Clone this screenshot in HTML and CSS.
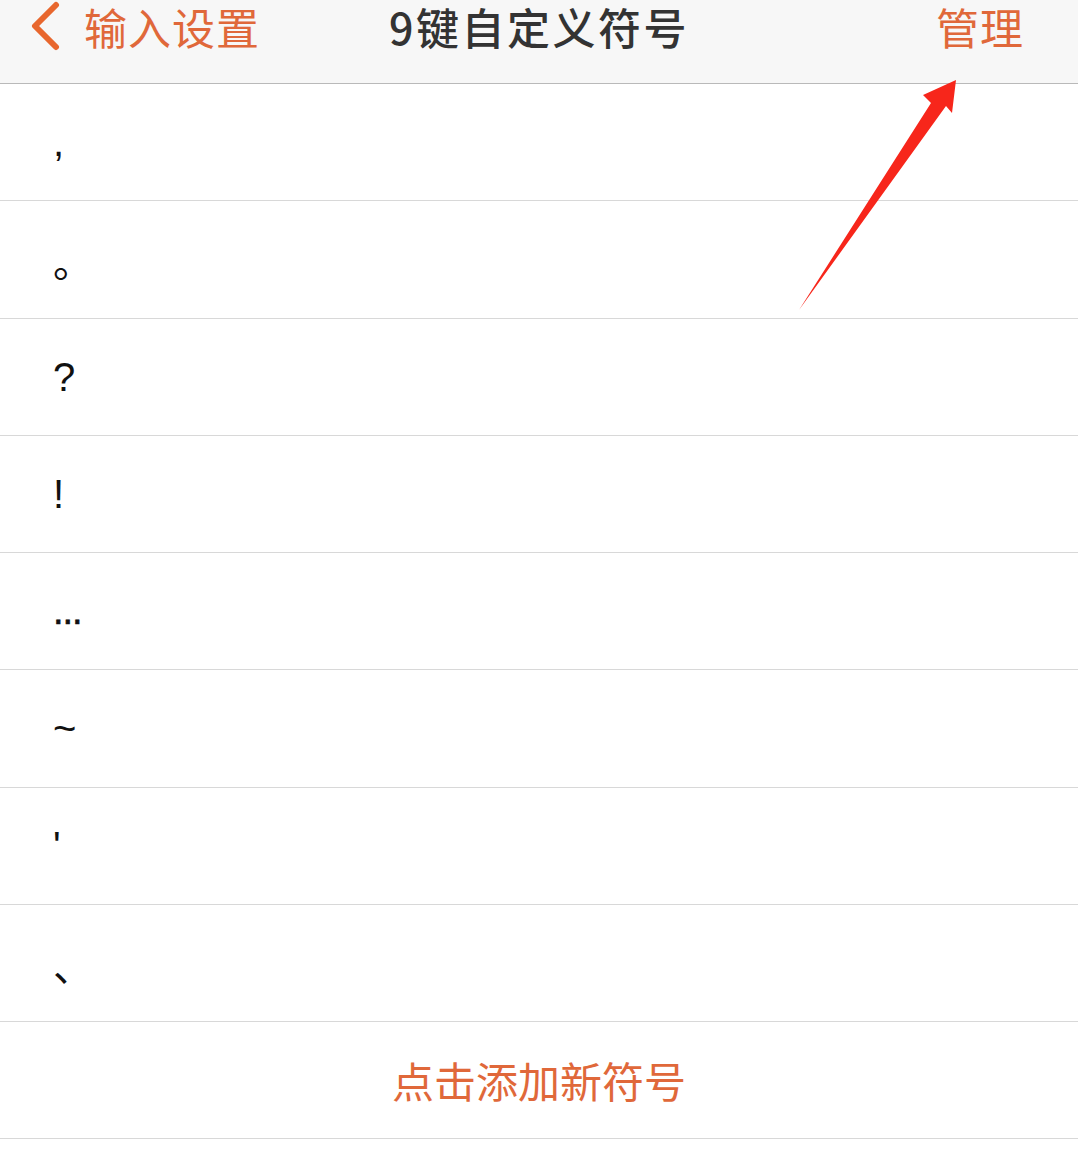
FILE: index.html
```html
<!DOCTYPE html>
<html lang="zh-CN">
<head>
<meta charset="utf-8">
<title>9键自定义符号</title>
<link rel="stylesheet" href="styles.css">
</head>
<body>
<div class="screen">
  <header class="navbar">
    <div class="nav-left">
      <svg class="chevron" width="30" height="50" viewBox="0 0 30 50"><polyline points="26,4 5,25 26,46" fill="none" stroke="#e8672e" stroke-width="6" stroke-linecap="round" stroke-linejoin="round"/></svg>
      <span class="back-text">输入设置</span>
    </div>
    <div class="nav-title">9键自定义符号</div>
    <div class="nav-right">管理</div>
  </header>
  <ul class="list">
    <li class="row"><span class="sym">,</span></li>
    <li class="row"><span class="sym cjk">。</span></li>
    <li class="row"><span class="sym">?</span></li>
    <li class="row"><span class="sym">!</span></li>
    <li class="row"><span class="sym dots">...</span></li>
    <li class="row"><span class="sym">~</span></li>
    <li class="row"><span class="sym">'</span></li>
    <li class="row"><span class="sym cjk">、</span></li>
    <li class="row add"><span class="add-text">点击添加新符号</span></li>
  </ul>
  <svg class="annot" width="1078" height="1164" viewBox="0 0 1078 1164">
    <polygon points="799,310 931,103 923,95 956,80 952,113 946,106" fill="#f7261b"/>
  </svg>
</div>
</body>
</html>
```

FILE: styles.css
```css
html, body {
  margin: 0;
  padding: 0;
  background: #ffffff;
}
body {
  font-family: "Liberation Sans", "Noto Sans CJK SC", sans-serif;
}
.screen {
  position: relative;
  width: 1078px;
  height: 1164px;
  overflow: hidden;
  background: #ffffff;
}
.navbar {
  box-sizing: border-box;
  height: 84px;
  padding-bottom: 31px;
  background: #f7f7f7;
  border-bottom: 1px solid #b9b9b9;
  display: grid;
  grid-template-columns: 1fr auto 1fr;
  align-items: center;
  font-family: "Noto Sans CJK SC", sans-serif;
  font-size: 43px;
  line-height: 52px;
}
.nav-left {
  display: flex;
  align-items: center;
  padding-left: 30px;
  color: #e0683a;
}
.chevron {
  display: block;
  margin-right: 24px;
}
.back-text {
  letter-spacing: 1px;
}
.nav-title {
  color: #333333;
  font-weight: 500;
  letter-spacing: 2.5px;
}
.nav-right {
  justify-self: end;
  padding-right: 54px;
  color: #e0683a;
  letter-spacing: 1px;
}
.list {
  list-style: none;
  margin: 0;
  padding: 0;
}
.row {
  box-sizing: border-box;
  height: 117.25px;
  border-bottom: 1px solid #d8d8d8;
  display: flex;
  align-items: center;
  padding-left: 53px;
  font-size: 40px;
  color: #111111;
}
.sym {
  line-height: 1;
}
.sym.dots {
  font-size: 38px;
  letter-spacing: -1px;
  -webkit-text-stroke: 0.6px #111111;
}
.sym.cjk {
  font-family: "Noto Sans CJK SC", sans-serif;
  font-size: 40px;
  position: relative;
  top: 1px;
}
.row.add {
  justify-content: center;
  padding-left: 0;
}
.add-text {
  font-family: "Noto Sans CJK SC", sans-serif;
  font-size: 42px;
  color: #e0683a;
  line-height: 1;
}
.annot {
  position: absolute;
  left: 0;
  top: 0;
  pointer-events: none;
}
```
